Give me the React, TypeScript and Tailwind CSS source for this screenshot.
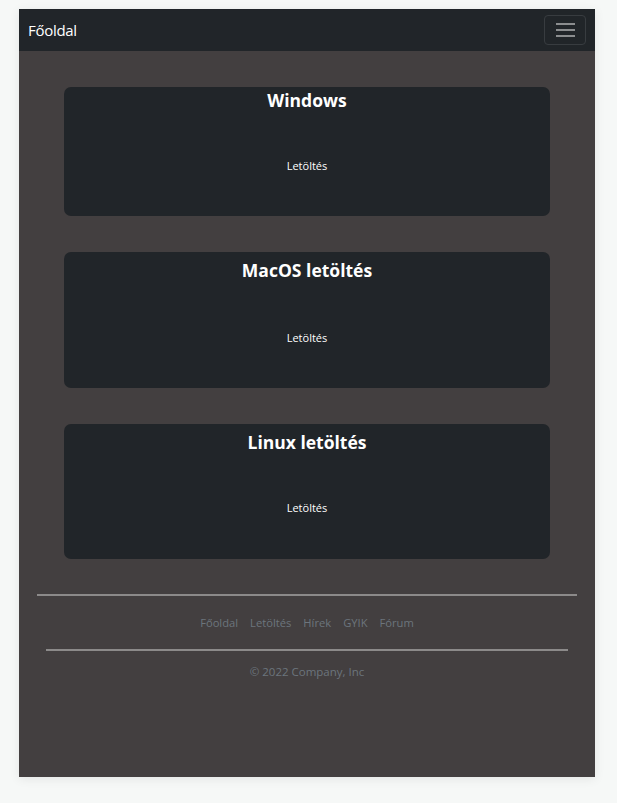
import React from 'react';

const cards = [
  { title: 'Windows', h: 'h-[129px]', t: 'mt-0', l: 'mt-[45px]' },
  { title: 'MacOS letöltés', h: 'h-[136px]', t: 'mt-[5px]', l: 'mt-[47px]' },
  { title: 'Linux letöltés', h: 'h-[135px]', t: 'mt-[5px]', l: 'mt-[45px]' },
];

const links = ['Főoldal', 'Letöltés', 'Hírek', 'GYIK', 'Fórum'];

export default function App() {
  return (
    <div className="min-h-[803px] bg-[#f6f8f7] pt-[9px] font-['Open_Sans',sans-serif]">
      <div className="mx-[19px] w-[576px] h-[768px] bg-[#433f40] shadow-[0_2px_10px_rgba(0,0,0,0.08)] flex flex-col">
        {/* navbar */}
        <nav className="h-[42px] bg-[#212529] flex items-center justify-between px-[9px]">
          <span className="text-white text-[15px] tracking-[-0.3px]">Főoldal</span>
          <button className="w-[42px] h-[30px] border border-[#383c40] rounded-[4px] flex flex-col items-center justify-center gap-[4px]">
            <span className="block w-[19px] h-[2px] bg-[#8b8d8f]" />
            <span className="block w-[19px] h-[2px] bg-[#8b8d8f]" />
            <span className="block w-[19px] h-[2px] bg-[#8b8d8f]" />
          </button>
        </nav>

        <main className="pt-[36px] px-[45px] flex flex-col gap-[36px]">
          {cards.map((c) => (
            <div key={c.title} className={`${c.h} bg-[#212529] rounded-[7px] flex flex-col items-center`}>
              <h2 className={`text-white text-[17.5px] font-bold leading-[26px] ${c.t}`}>{c.title}</h2>
              <p className={`text-white text-[11px] leading-[16px] ${c.l}`}>Letöltés</p>
            </div>
          ))}
        </main>

        <footer className="mt-[35px] px-[18px]">
          <hr className="border-0 h-[2px] bg-[#8c8a8a]" />
          <ul className="flex justify-center gap-[12px] mt-[19px] text-[11.2px] text-[#6c757d]">
            {links.map((l) => (
              <li key={l}>{l}</li>
            ))}
          </ul>
          <hr className="border-0 h-[2px] bg-[#8c8a8a] mx-[9px] mt-[17px]" />
          <p className="text-center text-[11.5px] text-[#6c757d] mt-[12px]">© 2022 Company, Inc</p>
        </footer>
      </div>
    </div>
  );
}
